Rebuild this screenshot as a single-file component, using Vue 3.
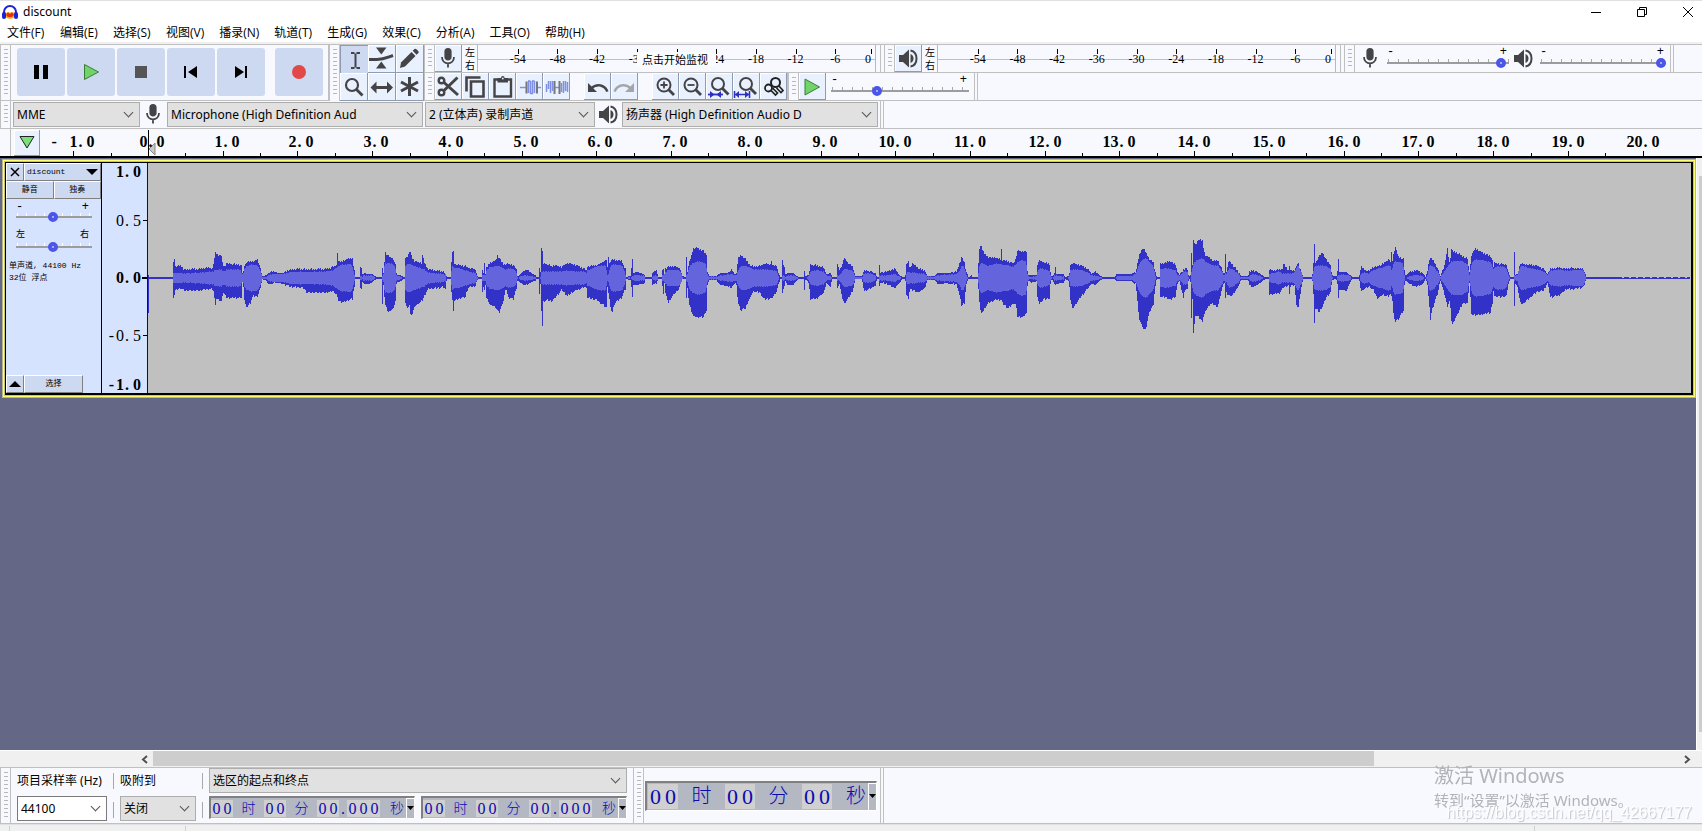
<script setup>
import { ref, h } from 'vue'

const INK = '#444446'
const BLUE = '#2f2fc4'
const s = (d, w = 2, c = INK) => ({ d, fill: 'none', stroke: c, w })
const f = (d, c = INK) => ({ d, fill: c, stroke: 'none', w: 0 })
const ring = (x, y, r) => `M${x - r} ${y}a${r} ${r} 0 1 0 ${2 * r} 0a${r} ${r} 0 1 0 ${-2 * r} 0z`

const glyphs = {
  mic: [f('M13 15.500c2 0 3.600-1.600 3.600-3.600V6.600a3.600 3.600 0 0 0-7.200 0v5.300c0 2 1.600 3.600 3.600 3.600z'), s('M7 12c0 4 2.800 6.300 6 6.300s6-2.300 6-6.300M13 18v4.500', 1.8)],
  speaker: [f('M4 10v7h4l6 5.500V4.500L8 10z'), f('M15.500 9c2 .8 3 2.500 3 4.500s-1 3.700-3 4.500z'), s('M15.500 5.500c4 .8 6 4.200 6 8s-2 7.200-6 8', 2)],
  ibeam: [s('M10 7h3.500M15.500 7H19M10 22h3.500M15.500 22H19M14.500 7.500v14', 2)],
  envelope: [f('M8 2.500h10.500l-5.200 7z'), f('M8 23.500h10.500l-5.200-7z'), s('M1 14.500h8c7 0 9-1.500 16-4', 3)],
  pencil: [f('M4 23l1-5.500L15.500 7l4 4L9 21.500z'), f('M16.700 5.800l1.800-1.800q1-.8 2 .2l1.700 1.700q1 1 .2 2l-1.800 1.800z')],
  zoom: [s(ring(12, 12, 6), 2.2), s('M16.500 16.500l6 6', 2.8)],
  shift: [s('M6 14.500h16', 3), f('M2.500 14.500l6-6v12zM25 14.500l-6-6v12z')],
  multi: [s('M13.500 4v19M5 9l17 9M22 9L5 18', 3)],
  cut: [s(ring(6.5, 7.5, 2.8), 2.4), s(ring(6.5, 19.5, 2.8), 2.4), s('M9 9.500l14 12.500M9 17.500l13.500-13', 3)],
  copy: [s('M4.500 18.500v-14h14', 2.6), s('M9 8.500h12.500v15H9z', 2.6)],
  paste: [s('M5.500 6.500h16.500v17H5.500z', 2.4), f('M8.500 9.500V5H12q0-2 1.800-2t1.800 2H19v4.500z'), f(ring(13.8, 5.5, 0.9), '#eaf1fe')],
  trim: [s('M4 14.500h6M21 14.500h4', 1.5, '#7f8fe6'), s('M12.500 8v12M14.500 8v13M16.500 8v13M18.500 8v12M12 8h2.500M16 8h2.500M14.500 20.500H17', 1.5, '#7f8fe6'), s('M10.500 8.500v12M21 8.500v12', 2, '#777')],
  silence: [s('M3.500 11v8M5.500 8v8M7.500 8v12M9.500 8v10M18.500 10v9M20.500 8v12M22.500 8v10M24.500 9v10', 1.5, '#7f8fe6'), s('M12 14.500h4', 1.5, '#7f8fe6'), s('M11.500 8v13M16.500 8v13', 2, '#777')],
  undo: [f('M14.500 11c-2.700 0-5 1-6.900 2.600L4 10v9h9l-3.600-3.600c1.400-1.200 3.200-1.900 5.100-1.900 3.500 0 6.500 2.300 7.600 5.500l2.400-.8C23.100 14 19.200 11 14.500 11z')],
  redo: [f('M19.400 13.600C17.500 12 15.100 11 12.500 11c-4.700 0-8.600 3-10 7.200l2.400.8c1-3.200 4-5.500 7.600-5.500 2 0 3.700.7 5.100 1.900L14 19h9v-9z', '#a3a5a8')],
  zoomIn: [s(ring(12, 12, 6.5), 2), s('M8.500 12h7M12 8.500v7', 1.8), s('M16.500 16.500l5.500 5.500', 2.8)],
  zoomOut: [s(ring(12, 12, 6.5), 2), s('M8.500 12h7', 1.8), s('M16.500 16.500l5.500 5.500', 2.8)],
  fitSel: [s(ring(12, 11, 6), 2), s('M16.500 15.500l6 6', 2.8), s('M2 21.500h15', 1.8, BLUE), f('M8.500 21.500L4 18v7zM10.500 21.500L15 18v7z', BLUE)],
  fitAll: [s(ring(13, 11, 6), 2), s('M17.500 15.500l5.500 5.500', 2.8), s('M2 21.500h14M1.500 18v7M16.500 18v7', 1.6, BLUE), f('M2 21.500L6 18v7zM16 21.500L12 18v7z', BLUE)],
  zoomToggle: [s(ring(15.5, 9.5, 4.5), 2, '#222'), s(ring(8.5, 15, 3.5), 1.8, '#222'), s('M18.500 12.500l4.500 5-2 2-4.500-4.500M11 17.500l4.500 4.500 2-2-5-5', 1.7, '#222')],
  play: [{ d: 'M6 6v16l14.500-8z', fill: '#6fd568', stroke: '#3f7a3c', w: 1 }],
}
const Icon = (p) =>
  h('svg', { width: 27, height: 27, viewBox: '0 0 27 27', 'aria-hidden': 'true' },
    glyphs[p.name].map((g) => h('path', { d: g.d, fill: g.fill, stroke: g.stroke, 'stroke-width': g.w })))
Icon.props = ['name']

const menus = ['文件(F)', '编辑(E)', '选择(S)', '视图(V)', '播录(N)', '轨道(T)', '生成(G)', '效果(C)', '分析(A)', '工具(O)', '帮助(H)']
const transport = [
  { name: '暂停', parts: [f('M17 17h5v14h-5zM26 17h5v14h-5z', '#000')] },
  { name: '播放', parts: [{ d: 'M17.500 16.500v15l14-7.500z', fill: '#6fd568', stroke: '#3f7a3c', w: 1 }] },
  { name: '停止', parts: [f('M18 18h12v12H18z', '#555')] },
  { name: '跳至开头', parts: [f('M17 18h2v12h-2zM30 18v12l-9-6z', '#000')] },
  { name: '跳至结尾', parts: [f('M28 18h2v12h-2zM18 18v12l9-6z', '#000')] },
  { name: '录制', parts: [f(ring(24, 24, 7), '#e24848')] },
]
const tools = [
  ['ibeam', '选择工具'], ['envelope', '包络工具'], ['pencil', '绘制工具'],
  ['zoom', '缩放工具'], ['shift', '时间移动工具'], ['multi', '多功能工具'],
]
const activeTool = ref('ibeam')
const editGroups = [
  [['cut', '剪切'], ['copy', '复制'], ['paste', '粘贴'], ['trim', '修剪'], ['silence', '静音']],
  [['undo', '撤销'], ['redo', '重做']],
  [['zoomIn', '放大'], ['zoomOut', '缩小'], ['fitSel', '适应选区'], ['fitAll', '适应项目'], ['zoomToggle', '缩放切换']],
]
const dbMarks = [-54, -48, -42, -36, -30, -24, -18, -12, -6, 0]
const markLeft = (i) => (i === 9 ? '99%' : (i + 1) * 10 + '%')

const recLevel = ref(97)
const playLevel = ref(100)
const speed = ref(32)
const gain = ref(48)
const pan = ref(48)

/* Timeline: seconds to pixels, counted from the left end of the ruler strip */
const PX_PER_SEC = 74.73
const ZERO = 107
const seconds = Array.from({ length: 22 }, (_, i) => i - 1)
const at = (t) => Math.round(ZERO + t * PX_PER_SEC)
const rulerTicks = Array.from({ length: 43 }, (_, i) => (i - 2) / 2)
  .map((t) => `M${at(t)}.5 ${Number.isInteger(t) ? 22 : 24}V27`).join('')

/* Envelope runs: [x, peak above, peak below, rms], heights in thirds of a pixel */
const runs = [
  { from: 12, pitch: 3, end: 1500, pts: [[0,3,3,0],[38,3,3,0],[39,36,57,14],[42,60,50,15],[46,36,36,15],[62,38,32,15],[72,26,38,14],[118,28,38,16],[140,32,34,18],[158,30,34,20],[162,45,42,20],[165,78,80,24],[168,74,62,24],[184,66,70,26],[189,38,42,20],[192,34,46,20],[200,44,60,26],[240,40,60,26],[243,36,60,24],[245,14,12,12],[250,16,12,12],[252,34,60,22],[259,48,90,36],[270,48,76,40],[280,50,54,40],[292,56,56,38],[300,34,34,26],[307,6,4,3],[318,8,6,3],[325,14,18,10],[342,22,16,12],[352,16,14,12],[370,16,18,12],[390,26,26,18],[430,28,30,19],[440,26,44,18],[500,28,44,20],[520,34,40,24],[530,40,50,32],[532,78,60,34],[535,50,66,36],[545,50,74,40],[570,60,64,42],[576,60,64,38],[582,24,30,16],[585,3,3,0],[599,3,3,0],[600,32,28,6],[604,30,36,6],[608,8,8,5],[612,14,18,8],[635,12,16,8],[645,6,5,3],[646,3,3,0],[665,3,3,0],[667,32,80,4],[670,10,14,8],[673,40,50,30],[675,78,80,44],[685,66,102,45],[700,58,92,42],[706,40,70,30],[710,10,12,6],[722,8,10,5],[732,3,3,0],[734,3,3,0],[735,60,70,34],[742,66,92,42],[750,78,80,42],[752,78,110,42],[757,60,108,38],[765,50,84,36],[785,46,70,28],[788,68,66,28],[795,40,50,24],[805,28,32,18],[820,24,32,14],[850,20,28,12],[857,12,32,10],[860,3,3,0],[872,3,3,0],[874,40,40,20],[877,80,60,34],[879,80,98,36],[882,44,70,30],[895,40,62,30],[915,36,58,24],[925,32,30,20],[945,26,24,16],[953,6,4,3],[955,3,3,0],[965,3,3,0],[967,26,42,8],[971,14,24,8],[973,48,40,10],[976,10,16,8],[980,30,60,24],[990,48,80,32],[1008,52,90,36],[1012,70,98,37],[1018,60,104,36],[1030,42,70,30],[1038,42,30,26],[1045,42,58,28],[1060,40,64,28],[1070,26,28,16],[1073,3,4,0],[1080,10,14,5],[1098,26,22,8],[1125,8,8,4],[1130,3,3,0],[1137,3,3,0],[1138,30,50,0],[1141,3,3,0],[1144,90,90,18],[1147,80,144,20],[1150,44,70,20],[1160,42,66,20],[1175,36,70,20],[1185,38,60,20],[1205,34,36,20],[1222,46,54,22],[1245,40,38,20],[1270,30,28,20],[1280,22,28,16],[1282,34,60,24],[1310,38,66,36],[1338,54,88,38],[1341,10,14,8],[1345,66,46,12],[1347,40,40,12],[1350,50,88,34],[1357,56,102,40],[1365,54,74,40],[1385,52,60,38],[1395,30,36,20],[1398,3,3,0],[1408,6,6,3],[1412,6,5,0],[1417,58,56,6],[1420,16,20,8],[1435,18,20,10],[1453,10,16,6],[1456,3,3,0],[1475,3,3,0],[1477,14,20,4],[1488,24,16,8],[1496,3,3,0],[1500,3,3,0]] },
  { from: 512, pitch: 3, end: 1500, pts: [[0,3,3,0],[5,3,3,0],[7,26,22,8],[10,26,46,10],[13,8,10,8],[16,28,44,18],[25,34,74,24],[40,36,50,24],[55,32,36,24],[62,26,20,18],[67,6,4,3],[77,3,3,0],[79,62,62,8],[82,20,30,10],[88,46,80,34],[100,88,116,46],[112,90,118,50],[130,82,118,48],[138,70,100,40],[142,18,20,12],[148,6,5,4],[168,6,5,4],[180,14,20,8],[200,14,24,10],[215,24,30,12],[226,10,14,8],[230,14,20,10],[234,60,76,24],[243,68,98,36],[255,58,92,36],[270,40,60,32],[280,34,40,26],[300,36,44,26],[312,44,64,26],[332,40,62,24],[334,54,62,24],[337,38,60,24],[350,38,40,20],[357,10,12,4],[359,3,3,0],[365,3,3,0],[367,54,42,8],[373,32,24,8],[377,10,6,4],[382,16,22,8],[400,14,20,8],[414,4,3,2],[431,3,3,0],[433,24,36,0],[437,4,3,0],[446,10,14,6],[452,40,64,20],[470,38,62,24],[490,32,46,20],[500,12,14,8],[510,14,26,6],[518,3,3,0],[530,3,3,0],[532,42,32,8],[538,24,14,8],[546,40,60,20],[554,60,76,28],[565,44,60,26],[578,34,40,22],[586,6,4,3],[606,6,4,3],[612,22,40,14],[630,22,32,14],[645,14,24,8],[652,3,3,0],[656,3,3,0],[658,40,26,8],[660,16,14,8],[680,20,18,8],[705,28,30,12],[718,10,16,6],[727,3,3,0],[736,3,3,0],[740,40,50,14],[745,50,60,18],[750,30,32,16],[757,44,36,18],[775,30,44,14],[795,22,30,12],[803,6,5,4],[825,6,5,4],[832,14,18,8],[860,14,16,10],[890,20,20,12],[897,40,44,18],[905,62,84,38],[912,48,76,34],[920,16,14,8],[926,3,3,0],[935,8,4,0],[938,3,3,0],[954,3,3,0],[957,86,60,30],[963,100,108,46],[970,78,98,44],[985,62,74,36],[1005,62,66,44],[1022,56,66,42],[1024,86,66,42],[1027,54,76,40],[1045,50,92,38],[1060,44,76,34],[1068,60,80,40],[1072,82,116,48],[1090,80,118,54],[1098,80,106,50],[1103,14,14,8],[1106,8,8,4],[1115,10,14,4],[1130,8,10,6],[1132,42,60,20],[1139,52,78,28],[1150,48,64,28],[1168,42,62,22],[1172,14,12,8],[1176,3,3,0],[1184,14,18,8],[1186,32,18,8],[1189,12,18,8],[1210,12,14,4],[1216,3,3,0],[1227,6,10,4],[1232,40,66,24],[1237,46,94,26],[1250,42,76,26],[1265,38,54,24],[1285,26,30,16],[1295,12,16,8],[1305,20,22,8],[1322,6,6,3],[1330,3,3,0],[1366,4,4,0],[1370,12,10,6],[1415,12,10,6],[1428,20,20,14],[1437,66,120,40],[1448,90,150,56],[1457,80,156,60],[1468,56,104,50],[1480,46,80,36],[1486,18,24,8],[1490,4,3,0],[1499,4,3,0],[1500,44,60,22]] },
  { from: 1012, pitch: 2.893, end: 1534, pts: [[0,44,56,26],[15,46,58,30],[30,52,66,28],[45,40,56,22],[50,22,20,12],[56,10,8,6],[63,18,36,12],[68,26,60,20],[73,30,34,20],[80,24,34,16],[83,6,4,2],[88,4,3,0],[91,78,122,20],[94,40,60,30],[97,112,166,44],[103,100,110,50],[112,116,118,56],[122,112,130,60],[130,70,104,52],[145,60,78,42],[155,52,80,38],[167,54,88,38],[178,30,40,22],[185,10,12,8],[187,14,16,8],[189,72,62,14],[192,20,46,14],[200,52,54,30],[210,40,52,26],[225,22,28,16],[235,6,5,3],[255,6,5,3],[260,20,22,8],[270,24,28,12],[285,16,18,8],[303,4,4,0],[314,4,4,0],[317,24,50,12],[345,24,46,20],[356,30,30,14],[358,42,30,14],[372,22,22,14],[375,38,52,14],[378,22,22,14],[390,22,22,16],[394,40,84,30],[400,42,88,38],[410,16,22,14],[414,3,3,0],[440,3,3,0],[443,24,20,16],[447,102,132,34],[450,44,90,36],[460,66,102,38],[470,76,86,38],[482,54,56,36],[494,38,44,26],[498,8,5,3],[510,4,4,0],[514,20,20,6],[516,60,62,10],[519,18,36,10],[540,18,38,10],[553,6,6,3],[556,3,3,0],[576,3,3,0],[582,34,40,14],[590,26,34,16],[605,20,26,14],[617,34,36,24],[630,36,62,28],[645,42,50,32],[660,56,56,38],[667,50,50,36],[669,76,48,26],[672,48,60,26],[677,80,124,50],[681,92,130,50],[690,64,124,48],[703,58,100,46],[707,24,24,10],[711,4,4,0],[718,16,16,4],[740,24,28,10],[760,16,18,6],[768,3,3,0],[773,16,12,4],[779,58,80,36],[782,60,124,38],[790,54,84,36],[803,30,50,20],[811,6,6,4],[825,44,56,24],[831,90,86,32],[838,44,70,44],[844,88,128,50],[847,80,138,50],[860,76,110,52],[875,66,78,50],[890,58,76,42],[895,14,10,6],[902,70,110,46],[912,90,112,56],[930,78,110,54],[955,66,104,48],[961,56,80,40],[964,28,30,24],[967,46,54,32],[985,42,58,36],[1002,42,54,30],[1010,10,8,4],[1013,3,3,0],[1023,3,3,0],[1025,78,84,10],[1028,10,18,6],[1034,12,24,10],[1042,44,74,34],[1050,42,78,36],[1070,40,60,30],[1090,38,42,26],[1110,28,38,20],[1121,12,14,8],[1130,28,58,22],[1155,32,52,26],[1175,28,34,22],[1195,30,34,24],[1225,28,28,24],[1231,12,10,8],[1233,3,3,0],[1540,3,3,0]] },
]
const MID = 115
let peakPath = `M0 ${MID - 3}h1v38h-1zM0 ${MID - 1}h12v2h-12z`
let rmsPath = ''
for (const run of runs) {
  const cols = Math.floor(run.end / run.pitch)
  for (let c = 0; c < cols; c++) {
    const lo = c * run.pitch
    const mid = lo + run.pitch / 2
    let k = run.pts.findIndex((p) => p[0] > mid)
    if (k < 1) k = run.pts.length - 1
    const a = run.pts[k - 1]
    const b = run.pts[k]
    const t = Math.min(1, (mid - a[0]) / (b[0] - a[0]))
    const v = [1, 2, 3].map((i) => a[i] + (b[i] - a[i]) * t)
    for (const p of run.pts) {
      if (p[0] >= lo && p[0] < lo + run.pitch) {
        v[0] = Math.max(v[0], p[1])
        v[1] = Math.max(v[1], p[2])
      }
    }
    const x = run.from + c
    const j = (n) => ((x * n) % 7) / 7 - 0.5
    const wob = v[0] > 18 ? 6 : 0
    const up = Math.max(1, Math.round((v[0] + j(3) * wob) / 3))
    const dn = Math.max(1, Math.round((v[1] + j(5) * wob) / 3))
    const rms = Math.round(Math.min(v[2] + j(4) * 3, v[0], v[1]) / 3)
    peakPath += `M${x} ${MID - up}h1v${up + dn}h-1z`
    if (v[2] > 2 && rms > 0) rmsPath += `M${x} ${MID - rms}h1v${rms * 2}h-1z`
  }
}

const scale = [
  { neg: false, v: '1.0', y: 9, bold: true }, { neg: false, v: '0.5', y: 58 }, { neg: false, v: '0.0', y: 115, bold: true },
  { neg: true, v: '0.5', y: 173 }, { neg: true, v: '1.0', y: 222, bold: true },
]
const clockParts = [['00', 1], ['时', 0], ['00', 1], ['分', 0], ['00', 1], ['.', 2], ['000', 1], ['秒', 0]]
const bigParts = [['00', 1], ['时', 0], ['00', 1], ['分', 0], ['00', 1], ['秒', 0]]
const clocks = ['选区起点', '选区终点']
const kinds = ['unit', 'digits', 'point']
</script>

<template>
  <div class="app">
    <header class="titlebar">
      <svg class="logo" width="16" height="16" viewBox="0 0 16 16" aria-hidden="true">
        <path d="M3 8.500h10v5l-5 1.500-5-1.500z" fill="#f6b21a" />
        <path d="M4 11l2-3 2 2 2-2 2 3-2 2H6z" fill="#e8320c" />
        <path d="M2 10V8a6 6 0 0 1 12 0v2" fill="none" stroke="#1c22d8" stroke-width="2" />
        <rect x="0" y="8" width="4" height="7" rx="2" fill="#1c22d8" />
        <rect x="12" y="8" width="4" height="7" rx="2" fill="#1c22d8" />
      </svg>
      <h1>discount</h1>
      <div class="winctl">
        <button aria-label="最小化"><svg width="12" height="12"><path d="M1 6.500h10" /></svg></button>
        <button aria-label="还原"><svg width="12" height="12"><path d="M1.500 3.500h7v7h-7zM3.500 3V1.500h7v7H9" /></svg></button>
        <button aria-label="关闭"><svg width="12" height="12"><path d="M1 1l10 10M11 1L1 11" /></svg></button>
      </div>
    </header>

    <nav class="menubar">
      <button v-for="m in menus" :key="m">{{ m }}</button>
    </nav>

    <div class="dock">
      <section class="bar transport">
        <span class="grip"></span>
        <div class="keys">
          <button v-for="t in transport" :key="t.name" :aria-label="t.name">
            <svg width="48" height="48" viewBox="0 0 48 48">
              <path v-for="(p, i) in t.parts" :key="i" :d="p.d" :fill="p.fill" :stroke="p.stroke" :stroke-width="p.w" />
            </svg>
          </button>
        </div>
      </section>
      <section class="bar">
        <span class="grip"></span>
        <div class="toolgrid">
          <button v-for="[n, label] in tools" :key="n" class="tb" :class="{ on: activeTool === n }" :aria-label="label" @click="activeTool = n">
            <Icon :name="n" />
          </button>
        </div>
      </section>

      <div class="lines">
        <div class="line">
          <section v-for="(kind, m) in ['mic', 'speaker']" :key="kind" class="bar meterbar">
            <span class="grip"></span>
            <button class="tb" :aria-label="m ? '播放电平' : '录制电平'"><Icon :name="kind" /></button>
            <div class="lr"><span>左</span><span>右</span></div>
            <div class="meter">
              <span v-for="(d, i) in dbMarks" :key="d" class="mark" :class="{ last: d === 0 }" :style="{ left: markLeft(i) }">{{ d }}</span>
              <button v-if="!m" class="hint">点击开始监视</button>
            </div>
          </section>
          <section class="bar mixer">
            <span class="grip"></span>
            <Icon name="mic" />
            <label class="slide">
              <span class="pm"><i>-</i><i>+</i></span>
              <input v-model="recLevel" type="range" aria-label="录制音量" />
            </label>
            <Icon name="speaker" />
            <label class="slide">
              <span class="pm"><i>-</i><i>+</i></span>
              <input v-model="playLevel" type="range" aria-label="播放音量" />
            </label>
          </section>
          <span class="rest"></span>
        </div>
        <div class="line">
          <section class="bar edit">
            <span class="grip"></span>
            <div v-for="(g, i) in editGroups" :key="i" class="group">
              <button v-for="[n, label] in g" :key="n" class="tb" :aria-label="label"><Icon :name="n" /></button>
            </div>
          </section>
          <section class="bar speedbar">
            <span class="grip"></span>
            <button class="tb" aria-label="以指定速度播放"><Icon name="play" /></button>
            <label class="slide wide">
              <span class="pm"><i>-</i><i>+</i></span>
              <input v-model="speed" type="range" aria-label="播放速度" />
            </label>
          </section>
          <span class="rest"></span>
        </div>
      </div>
    </div>

    <div class="line devices">
      <section class="bar">
        <span class="grip"></span>
        <div class="pick host"><select aria-label="音频主机"><option>MME</option></select></div>
        <Icon name="mic" />
        <div class="pick dev"><select aria-label="录音设备"><option>Microphone (High Definition Aud</option></select></div>
        <div class="pick chan"><select aria-label="录音声道"><option>2 (立体声) 录制声道</option></select></div>
        <Icon name="speaker" />
        <div class="pick dev"><select aria-label="播放设备"><option>扬声器 (High Definition Audio D</option></select></div>
      </section>
      <span class="rest"></span>
    </div>

    <div class="timeline">
      <span class="stub"></span>
      <button class="tb pin" aria-label="固定播放头">
        <svg width="26" height="26"><path d="M6 6.500h14L13 18z" fill="#7be07a" stroke="#222" /></svg>
      </button>
      <div class="ruler">
        <svg width="100%" height="27">
          <path :d="rulerTicks" stroke="#000" />
          <path d="M108 20l6-6v12z" fill="#c8c8c8" stroke="#888" />
          <path d="M107.500 1v26" stroke="#000" />
        </svg>
        <span v-for="t in seconds" :key="t" class="sec" :class="{ one: t >= 0 && t < 10 }" :style="{ left: at(t) + 'px' }"><b v-if="t < 0" class="neg wide-neg">-</b>{{ Math.abs(t) }}<i>.</i>0</span>
      </div>
    </div>

    <main class="work">
      <div class="canvas">
        <article class="track">
          <div class="panel">
            <div class="prow">
              <button class="pb x" aria-label="关闭轨道"><svg width="10" height="10"><path d="M1 1l8 8M9 1L1 9" stroke="#000" stroke-width="1.500" /></svg></button>
              <button class="pb name">discount<svg width="12" height="6"><path d="M0 0h12L6 6z" /></svg></button>
            </div>
            <div class="prow">
              <button class="pb half">静音</button>
              <button class="pb half">独奏</button>
            </div>
            <label class="slide mini">
              <span class="pm"><i>-</i><i>+</i></span>
              <input v-model="gain" type="range" aria-label="增益" />
            </label>
            <label class="slide mini">
              <span class="pm cn"><i>左</i><i>右</i></span>
              <input v-model="pan" type="range" aria-label="声像" />
            </label>
            <p>单声道, 44100 Hz<br />32位 浮点</p>
            <div class="prow foot">
              <button class="pb x" aria-label="折叠"><svg width="12" height="6"><path d="M0 6h12L6 0z" /></svg></button>
              <button class="pb sel">选择</button>
            </div>
          </div>
          <div class="vscale">
            <svg width="45" height="230"><path d="M41 57.500h4M40 114.500h5M40 115.500h5M41 172.500h4" stroke="#000" /></svg>
            <span v-for="r in scale" :key="r.y" :class="{ bold: r.bold }" :style="{ top: r.y + 'px' }"><b v-if="r.neg" class="neg">-</b>{{ r.v.split('.')[0] }}<i>.</i>{{ r.v.split('.')[1] }}</span>
          </div>
          <svg class="wave" height="230" shape-rendering="crispEdges" role="img" aria-label="discount 波形">
            <path :d="peakPath" fill="#3232c8" />
            <path :d="rmsPath" fill="#6464dc" />
            <path d="M1474 114.500h70" stroke="#c0c0c0" stroke-dasharray="2 5" />
          </svg>
        </article>
      </div>
      <div class="vscroll"><span></span></div>
    </main>

    <div class="hscroll">
      <button class="arrow" aria-label="向左滚动"><svg width="7" height="9"><path d="M6 1L2 4.500 6 8" /></svg></button>
      <div class="rail"><span></span></div>
      <button class="arrow" aria-label="向右滚动"><svg width="7" height="9"><path d="M1 1l4 3.500L1 8" /></svg></button>
    </div>

    <div class="bottom">
      <section class="bar selection">
        <span class="grip"></span>
        <div class="field rate">
          <label for="rate">项目采样率 (Hz)</label>
          <div class="pick white"><select id="rate"><option>44100</option></select></div>
        </div>
        <span class="seps"></span>
        <div class="field snap">
          <label for="snap">吸附到</label>
          <div class="pick"><select id="snap"><option>关闭</option></select></div>
        </div>
        <span class="seps"></span>
        <div class="field range">
          <div class="pick"><select aria-label="选区模式"><option>选区的起点和终点</option></select></div>
          <div class="clocks">
            <div v-for="c in clocks" :key="c" class="clock" role="group" :aria-label="c">
              <span v-for="([txt, k], i) in clockParts" :key="i" :class="kinds[k]"><b v-for="(ch, n) in txt" :key="n">{{ ch }}</b></span>
              <button aria-label="格式"><svg width="7" height="5"><path d="M0 0h7L3.500 4z" /></svg></button>
            </div>
          </div>
        </div>
      </section>
      <section class="bar timebar">
        <span class="grip"></span>
        <div class="clock big" role="group" aria-label="音频位置">
          <span v-for="([txt, k], i) in bigParts" :key="i" :class="kinds[k]"><b v-for="(ch, n) in txt" :key="n">{{ ch }}</b></span>
          <button aria-label="格式"><svg width="7" height="5"><path d="M0 0h7L3.500 4z" /></svg></button>
        </div>
      </section>
      <span class="rest"></span>
    </div>

    <footer class="status"><span></span><span></span><span></span></footer>

    <aside class="notice">
      <strong>激活 Windows</strong>
      <span>转到“设置”以激活 Windows。</span>
    </aside>
    <div class="credit">https://blog.csdn.net/qq_42667177</div>
  </div>
</template>

<style>
body { margin: 0; overflow: hidden; }
</style>

<style scoped>
* { box-sizing: border-box; }
.app {
  height: 100vh;
  display: flex;
  flex-direction: column;
  background: #f8f9ff;
  color: #000;
  font: 12px/16px "Noto Sans", "Noto Sans CJK SC", sans-serif;
}
svg { display: block; flex: none; }
i, b { font-style: normal; font-weight: inherit; }
button { margin: 0; padding: 0; border: 0; background: none; color: inherit; font: inherit; }

.titlebar { display: flex; align-items: center; height: 23px; padding-left: 2px; background: #fff; border-top: 1px solid #e0e0e0; }
.titlebar h1 { flex: 1; margin: 0 0 0 5px; font-size: 12px; font-weight: 400; }
.winctl { display: flex; padding-right: 8px; }
.winctl button { width: 46px; height: 20px; display: grid; align-items: center; justify-items: end; }
.winctl path { fill: none; stroke: #000; }

.menubar { display: flex; gap: 15px; height: 21px; padding: 1px 7px 0; background: #fff; border-bottom: 2px solid #f0f0f0; font-family: "Open Sans", "Noto Sans CJK SC", sans-serif; }
.menubar button { min-width: 38px; text-align: left; white-space: nowrap; }

.dock { display: flex; border-top: 1px solid #c0c0c0; }
.lines { flex: 1; min-width: 0; }
.line { display: flex; height: 28px; border-bottom: 1px solid #c0c0c0; }
.bar { display: flex; flex: none; }
.grip {
  flex: none;
  width: 11px;
  border: solid #c0c0c0;
  border-width: 0 1px;
  background: repeating-linear-gradient(#b8b8bc 0 1px, transparent 1px 4px) 3px 4px / 4px calc(100% - 8px) no-repeat;
}
.rest { flex: 1; margin-left: 2px; border-left: 1px solid #c0c0c0; }
.transport { border: solid #c0c0c0; border-width: 0 1px 1px 0; }
.keys { display: flex; gap: 2px; padding: 3px 5px 4px 6px; }
.keys button { width: 48px; height: 48px; border-radius: 3px; background: #ccd9f1; }
.keys button:last-child { margin-left: 8px; }
.toolgrid { display: grid; grid-template-columns: repeat(3, 28px); grid-auto-rows: 28px; }
.tb { display: grid; place-items: center; width: 27px; height: 27px; background: #eaf1fe; border: solid #8f9bb0; border-width: 0 1px 1px 0; box-shadow: inset 1px 1px #fff; overflow: hidden; }
.toolgrid .tb { width: 28px; height: 28px; }
.tb.on { background: #ccd9f1; border-width: 1px 0 0 1px; box-shadow: none; }

.meterbar { padding-right: 4px; border-right: 1px solid #c0c0c0; }
.meterbar + .bar { margin-left: 3px; }
.lr { display: flex; flex-direction: column; width: 15px; padding-left: 3px; font-size: 10px; line-height: 13px; font-family: "Noto Sans CJK SC", sans-serif; }
.meter { position: relative; width: 399px; border-left: 1px solid #b8b8b8; border-right: 1px solid #b8b8b8; background: linear-gradient(#c0c0c0, #c0c0c0) 0 14px / 100% 1px no-repeat; font: 12px/12px "Liberation Serif", serif; }
.mark { position: absolute; top: 8px; transform: translateX(-50%); }
.mark::before { content: ""; position: absolute; left: 50%; top: -4px; height: 5px; border-left: 1px solid #000; }
.mark.last { transform: translateX(-100%); }
.mark.last::before { left: 100%; }
.hint { position: absolute; left: 159px; top: 7px; width: 79px; height: 14px; background: #fbfcff; font: 11px/14px "Noto Sans CJK SC", sans-serif; text-align: left; padding-left: 5px; }

.slide { display: flex; flex-direction: column; width: 122px; }
.mixer { padding: 0 4px 0 2px; border-right: 1px solid #c0c0c0; }
.mixer .grip { margin-left: -2px; margin-right: 2px; }
.mixer .slide { margin-left: 3px; }
.mixer .slide + svg { margin-left: 1px; }
.mixer .slide:last-child { width: 126px; }
.slide.wide { width: 138px; margin-left: 5px; }
.pm { display: flex; justify-content: space-between; height: 12px; padding: 0 2px 0 0; font: 12px/14px "Liberation Mono", monospace; }
.slide input {
  appearance: none;
  display: block;
  width: 100%;
  height: 11px;
  margin: 0;
  background:
    linear-gradient(#9c9c9c, #9c9c9c) 0 5px / 100% 2px no-repeat,
    repeating-linear-gradient(90deg, #a8a8a8 0 1px, transparent 1px 10px) 1px 2px / 100% 4px no-repeat;
}
.slide input::-webkit-slider-thumb { appearance: none; width: 10px; height: 10px; border-radius: 50%; border: 4px solid #4a55ea; background: #c8c8d0; }

.edit { border-right: 1px solid #c0c0c0; }
.group { display: flex; }
.group + .group { margin-left: 14px; }
.speedbar { padding-right: 5px; border-right: 1px solid #c0c0c0; }

.devices .bar { align-items: center; padding-right: 2px; border-right: 1px solid #c0c0c0; }
.devices .grip { align-self: stretch; margin-right: 2px; }
.pick { position: relative; height: 25px; }
.pick::after { content: ""; position: absolute; right: 8px; top: 7px; width: 6px; height: 6px; border: solid #555; border-width: 0 1px 1px 0; transform: rotate(45deg); pointer-events: none; }
.pick select { appearance: none; width: 100%; height: 100%; padding: 0 18px 0 3px; border: 1px solid #adadad; border-radius: 0; background: #e1e1e1; color: #000; font: inherit; }
.pick.white select { background: #fff; border-color: #7a7a7a; }
.host { width: 127px; }
.dev { width: 256px; }
.chan { width: 170px; margin-left: 2px; }

.timeline { display: flex; height: 29px; border-bottom: 2px solid #000; }
.stub { flex: none; width: 11px; border-right: 1px solid #c0c0c0; margin-right: 3px; }
.pin { margin-top: 1px; width: 26px; height: 26px; }
.ruler { position: relative; flex: 1; margin-left: 1px; overflow: hidden; }
.sec, .vscale span { font: 16px/16px "Liberation Serif", serif; white-space: nowrap; }
.sec i, .vscale i { display: inline-block; width: 9px; padding-left: 1px; }
.neg { display: inline-block; width: 9px; text-align: center; }
.wide-neg { width: 18px; text-align: left; }
.sec { position: absolute; top: 5px; transform: translateX(-50%); font-weight: 700; }
.sec.one { margin-left: 4px; }

.work { flex: 1; display: flex; min-height: 0; border-bottom: 1px solid #fff; }
.canvas { flex: 1; min-width: 0; padding: 2px 1px 0; background: #646786; }
.track { display: flex; border: 1px solid #000; border-bottom-width: 2px; border-right-width: 2px; margin: 2px 2px 0 4px; box-shadow: 0 0 0 1px #c8c864, 0 0 0 2px #ffff70, 0 0 0 3px #b8b887; }
.panel { display: flex; flex-direction: column; width: 96px; background: #d6e3ff; border-right: 1px solid #000; font: 9px/12px "Liberation Serif", "Noto Sans CJK SC", serif; }
.prow { display: flex; }
.pb { display: flex; align-items: center; justify-content: center; height: 18px; background: #ccd9f1; border: solid; border-width: 1px; border-color: #fff #808080 #808080 #fff; font-family: "Liberation Mono", "Noto Sans CJK SC", monospace; font-size: 8px; }
.pb.x { width: 18px; }
.pb.name { flex: 1; justify-content: space-between; padding: 0 2px; }
.pb.half { flex: 1; }
.pb.sel { width: 59px; }
.foot { margin-top: auto; }
.slide.mini { width: 76px; margin: 0 0 0 10px; }
.mini .pm { height: 11px; margin-top: 1px; padding: 0 3px 0 0; }
.mini .pm.cn { height: 15px; margin-top: 4px; font: 9px/16px "Noto Sans CJK SC", sans-serif; }
.slide.mini input { background: linear-gradient(#9c9c9c, #9c9c9c) 0 5px / 100% 2px no-repeat, repeating-linear-gradient(90deg, #fff 0 1px, transparent 1px 9px) 1px 2px / 100% 4px no-repeat; }
.panel p { margin: 8px 0 0 3px; font-family: "Liberation Mono", "Noto Sans CJK SC", monospace; font-size: 8px; white-space: nowrap; }
.vscale { position: relative; width: 45px; background: #d6e3ff; }
.vscale span { position: absolute; right: 6px; transform: translateY(-50%); }
.vscale .bold { font-weight: 700; }
.wave { flex: 1; min-width: 0; width: 0; background: #c0c0c0; border-left: 1px solid #201010; }
.vscroll { width: 6px; padding: 18px 0 18px 2px; background: #f0f0f0; border-left: 1px solid #fff; }
.vscroll span { display: block; height: 100%; background: #cdcdcd; }

.hscroll { display: flex; height: 16px; margin-right: 6px; padding-left: 136px; background: #f0f0f0; box-shadow: 6px 0 #f0f0f0; }
.arrow { width: 17px; display: grid; place-items: center; }
.arrow path { fill: none; stroke: #505050; stroke-width: 2; }
.rail { flex: 1; padding-bottom: 1px; }
.rail span { display: block; width: 80%; height: 100%; background: #cdcdcd; }

.bottom { display: flex; height: 57px; border-top: 1px solid #c0c0c0; border-bottom: 1px solid #c0c0c0; }
.field { display: flex; flex-direction: column; justify-content: space-between; padding-bottom: 2px; }
.field label { padding-top: 5px; white-space: nowrap; }
.rate { width: 90px; margin-left: 6px; }
.snap { width: 76px; }
.range { width: 418px; }
.seps { width: 1px; margin: 0 6px; background: linear-gradient(#a8a8a8 0 0) 0 5px / 1px 16px no-repeat, linear-gradient(#a8a8a8 0 0) 0 34px / 1px 16px no-repeat; }
.clocks { display: flex; justify-content: space-between; padding-bottom: 2px; }
.clock { display: flex; align-items: center; width: 206px; height: 23px; padding-left: 0; background: #b3b8c2; border: solid; border-width: 2px 1px 1px 2px; border-color: #808080 #fff #fff #808080; color: #0a0ab4; font: 16px/17px "Liberation Serif", "Noto Sans CJK SC", serif; }
.clock span { display: flex; }
.clock b { width: 11px; text-align: center; }
.clock .digits { background: #d0d0d0; }
.clock .unit { justify-content: center; width: 31px; font-size: 14px; font-weight: 300; }
.clock .unit b { width: auto; }
.clock .point b { width: 8px; }
.clock button { display: grid; place-items: center; margin-left: auto; width: 8px; align-self: stretch; border-left: 1px solid #fff; border-top: 1px solid #fff; color: #000; }
.clock .unit:last-of-type { justify-content: flex-end; width: 24px; }
.timebar { align-items: center; padding-right: 3px; border-right: 1px solid #c0c0c0; }
.timebar .grip { align-self: stretch; margin: 0 1px 0 6px; }
.clock.big { width: 232px; height: 30px; padding-left: 1px; font-size: 22px; line-height: 25px; }
.big b { width: 15px; }
.big .unit { width: 47px; font-size: 20px; }
.big .unit:last-of-type { width: 34px; }

.status { display: flex; height: 7px; background: #f0f0f0; border-top: 1px solid #e0e0e0; padding-top: 1px; }
.status span { border-right: 1px solid #d0d0d0; }
.status span:nth-child(1) { width: 10px; }
.status span:nth-child(2) { width: 176px; }
.status span:nth-child(3) { flex: 1; margin-right: 167px; }

.notice { position: fixed; right: 68px; bottom: 20px; width: 200px; display: flex; flex-direction: column; color: #b2b3b6; white-space: nowrap; pointer-events: none; }
.notice strong { font-size: 20px; line-height: 26px; font-weight: 400; }
.notice span { font-size: 15px; line-height: 22px; }
.credit { position: fixed; right: 10px; bottom: 9px; font: 16px/18px "Liberation Sans", sans-serif; color: #fff; text-shadow: 1px 1px 1px #c4c4c8; pointer-events: none; }
</style>
